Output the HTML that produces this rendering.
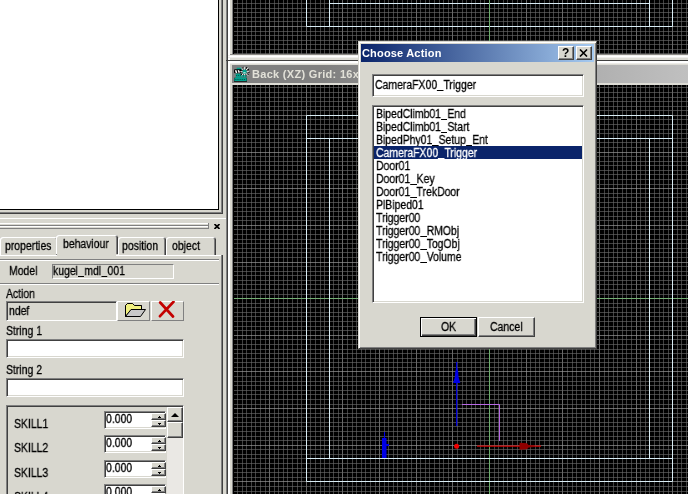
<!DOCTYPE html>
<html><head><meta charset="utf-8"><title>Choose Action</title>
<style>
html,body{margin:0;padding:0}
body{width:688px;height:494px;overflow:hidden;background:#d8d7cf;position:relative;font-family:"Liberation Sans",sans-serif}
#root{position:absolute;left:0;top:0;width:688px;height:494px;overflow:hidden;background:#d8d7cf}
#root div,#root svg,#root span{position:absolute;box-sizing:content-box}
.t{-webkit-text-stroke:0.3px currentColor;will-change:transform;white-space:pre;line-height:1;transform-origin:0 0;font-family:"Liberation Sans",sans-serif}
.u{display:inline-block;width:7.6px;height:1px;background:currentColor;vertical-align:-2px}
.sunk{border:1px solid;border-color:#808080 #fff #fff #808080;box-shadow:inset 1px 1px 0 #404040, inset -1px -1px 0 #d8d7cf}
.rais{border:1px solid;border-color:#fff #404040 #404040 #fff;box-shadow:inset -1px -1px 0 #808080, inset 1px 1px 0 #d8d7cf}
</style></head><body><div id="root">
<div style="left:0px;top:0px;width:218px;height:209px;background:#fff;"></div>
<div style="left:218px;top:0px;width:1px;height:210px;background:#000;"></div>
<div style="left:0px;top:209px;width:219px;height:1px;background:#000;"></div>
<div style="left:221px;top:0px;width:1px;height:213px;background:#808080;"></div>
<div style="left:222px;top:0px;width:1px;height:214px;background:#404040;"></div>
<div style="left:0px;top:212px;width:222px;height:1px;background:#808080;"></div>
<div style="left:0px;top:213px;width:223px;height:1px;background:#404040;"></div>
<div style="left:226px;top:0px;width:1px;height:494px;background:#808080;"></div>
<div style="left:227px;top:0px;width:1px;height:494px;background:#404040;"></div>
<div style="left:228px;top:0px;width:2px;height:494px;background:#fff;"></div>
<div style="left:232px;top:0px;width:1px;height:494px;background:#808080;"></div>
<div style="left:233px;top:0px;width:1px;height:494px;background:#000;"></div>
<div style="left:0px;top:218px;width:226px;height:1px;background:#fff;"></div>
<div style="left:0px;top:223px;width:208px;height:1px;background:#fff;"></div>
<div style="left:0px;top:225px;width:209px;height:1px;background:#808080;"></div>
<div style="left:208px;top:223px;width:1px;height:3px;background:#808080;"></div>
<div style="left:0px;top:226px;width:208px;height:1px;background:#fff;"></div>
<div style="left:0px;top:228px;width:209px;height:1px;background:#808080;"></div>
<div style="left:208px;top:226px;width:1px;height:3px;background:#808080;"></div>
<svg style="left:214px;top:224px" width="6" height="5" viewBox="0 0 6 5"><path d="M0.5 0L5.5 5M5.5 0L0.5 5" stroke="#000" stroke-width="1.7" fill="none"/></svg>
<div style="left:0px;top:255px;width:221px;height:1px;background:#fff;"></div>
<div style="left:221px;top:255px;width:1px;height:239px;background:#808080;"></div>
<div style="left:222px;top:255px;width:1px;height:239px;background:#404040;"></div>
<div style="left:0px;top:237px;width:58px;height:18px;background:#d8d7cf;border-radius:3px 3px 0 0;box-shadow:inset 1px 1px 0 #fff, inset -1px 0 0 #404040, inset -2px 0 0 #808080"></div>
<span class="t" style="left:4.8px;top:239.82px;font-size:12.5px;color:#000;transform:scaleX(0.835);">properties</span>
<div style="left:118px;top:237px;width:48px;height:18px;background:#d8d7cf;border-radius:3px 3px 0 0;box-shadow:inset 1px 1px 0 #fff, inset -1px 0 0 #404040, inset -2px 0 0 #808080"></div>
<span class="t" style="left:122.0px;top:239.82px;font-size:12.5px;color:#000;transform:scaleX(0.835);">position</span>
<div style="left:166px;top:237px;width:50px;height:18px;background:#d8d7cf;border-radius:3px 3px 0 0;box-shadow:inset 1px 1px 0 #fff, inset -1px 0 0 #404040, inset -2px 0 0 #808080"></div>
<span class="t" style="left:172.1px;top:239.82px;font-size:12.5px;color:#000;transform:scaleX(0.835);">object</span>
<div style="left:56px;top:235px;width:62px;height:19px;background:#d8d7cf;border-radius:3px 3px 0 0;box-shadow:inset 1px 1px 0 #fff, inset -1px 0 0 #404040, inset -2px 0 0 #808080"></div>
<span class="t" style="left:62.9px;top:237.82px;font-size:12.5px;color:#000;transform:scaleX(0.835);">behaviour</span>
<div style="left:57px;top:254px;width:59px;height:2px;background:#d8d7cf;"></div>
<div style="left:0px;top:259px;width:219px;height:1px;background:#808080;"></div>
<div style="left:0px;top:260px;width:219px;height:1px;background:#fff;"></div>
<div style="left:0px;top:283px;width:219px;height:1px;background:#808080;"></div>
<div style="left:0px;top:284px;width:219px;height:1px;background:#fff;"></div>
<span class="t" style="left:8.8px;top:264.82px;font-size:12.5px;color:#000;transform:scaleX(0.835);">Model</span>
<div style="left:52px;top:264px;width:120px;height:13px;border:1px solid;border-color:#808080 #fff #fff #808080"></div>
<span class="t" style="left:53.2px;top:265.32px;font-size:12.5px;color:#000;transform:scaleX(0.835);">kugel<i class="u"></i>mdl<i class="u"></i>001</span>
<span class="t" style="left:5.8px;top:287.82px;font-size:12.5px;color:#000;transform:scaleX(0.835);">Action</span>
<div class="sunk" style="left:6px;top:301px;width:109px;height:18px;background:#d8d7cf"></div>
<span class="t" style="left:8.8px;top:305.02px;font-size:12.5px;color:#000;transform:scaleX(0.835);">ndef</span>
<div style="left:117px;top:301px;width:31px;height:18px;border:1px solid;border-color:#fff #808080 #808080 #fff"></div>
<div style="left:151px;top:301px;width:31px;height:18px;border:1px solid;border-color:#fff #808080 #808080 #fff"></div>
<svg style="left:124px;top:302px" width="23" height="17" viewBox="0 0 23 17">
<path d="M1.5 14.5V3.5L3.5 1.5H8.5L10.5 3.5H17.5V7.5" fill="#f4f48c" stroke="#000" stroke-width="1"/>
<path d="M1.5 14.5V3.5L3.5 1.5H8.5L10.5 3.5H17.5V7.5H7.5L1.5 14.5z" fill="#f0f080" stroke="#000" stroke-width="1"/>
<path d="M1.5 14.5L7 7.5H21.5L16.5 14.5z" fill="#c8c8c8" stroke="#000" stroke-width="1"/>
</svg>
<svg style="left:157px;top:301px" width="19" height="17" viewBox="0 0 19 17">
<path d="M3.2 1.5L16 15.5M16.5 0.8L3 15.2" stroke="#c40000" stroke-width="2.7" stroke-linecap="round" fill="none"/></svg>
<span class="t" style="left:5.8px;top:325.02px;font-size:12.5px;color:#000;transform:scaleX(0.835);">String 1</span>
<div class="sunk" style="left:6px;top:339px;width:176px;height:17px;background:#fff"></div>
<span class="t" style="left:5.8px;top:363.92px;font-size:12.5px;color:#000;transform:scaleX(0.835);">String 2</span>
<div class="sunk" style="left:6px;top:378px;width:176px;height:17px;background:#fff"></div>
<div class="sunk" style="left:6px;top:405px;width:176px;height:100px;background:#d8d7cf"></div>
<span class="t" style="left:13.8px;top:417.72px;font-size:12.5px;color:#000;transform:scaleX(0.835);">SKILL1</span>
<div class="sunk" style="left:104px;top:411px;width:60px;height:16px;background:#fff"></div>
<span class="t" style="left:105.9px;top:412.82px;font-size:12.5px;color:#000;transform:scaleX(0.835);">0.000</span>
<div class="rais" style="left:151px;top:413px;width:13px;height:5px;background:#d8d7cf"></div>
<svg style="left:157.5px;top:415.5px" width="3" height="2" viewBox="0 0 3 2"><path d="M1 0h1v1h1v1h-3v-1h1z" fill="#000"/></svg>
<div class="rais" style="left:151px;top:420px;width:13px;height:5px;background:#d8d7cf"></div>
<svg style="left:157.5px;top:422.5px" width="3" height="2" viewBox="0 0 3 2"><path d="M0 0h3v1h-1v1h-1v-1h-1z" fill="#000"/></svg>
<span class="t" style="left:13.8px;top:442.12px;font-size:12.5px;color:#000;transform:scaleX(0.835);">SKILL2</span>
<div class="sunk" style="left:104px;top:435px;width:60px;height:16px;background:#fff"></div>
<span class="t" style="left:105.9px;top:436.82px;font-size:12.5px;color:#000;transform:scaleX(0.835);">0.000</span>
<div class="rais" style="left:151px;top:437px;width:13px;height:5px;background:#d8d7cf"></div>
<svg style="left:157.5px;top:439.5px" width="3" height="2" viewBox="0 0 3 2"><path d="M1 0h1v1h1v1h-3v-1h1z" fill="#000"/></svg>
<div class="rais" style="left:151px;top:444px;width:13px;height:5px;background:#d8d7cf"></div>
<svg style="left:157.5px;top:446.5px" width="3" height="2" viewBox="0 0 3 2"><path d="M0 0h3v1h-1v1h-1v-1h-1z" fill="#000"/></svg>
<span class="t" style="left:13.8px;top:466.72px;font-size:12.5px;color:#000;transform:scaleX(0.835);">SKILL3</span>
<div class="sunk" style="left:104px;top:460px;width:60px;height:16px;background:#fff"></div>
<span class="t" style="left:105.9px;top:461.82px;font-size:12.5px;color:#000;transform:scaleX(0.835);">0.000</span>
<div class="rais" style="left:151px;top:462px;width:13px;height:5px;background:#d8d7cf"></div>
<svg style="left:157.5px;top:464.5px" width="3" height="2" viewBox="0 0 3 2"><path d="M1 0h1v1h1v1h-3v-1h1z" fill="#000"/></svg>
<div class="rais" style="left:151px;top:469px;width:13px;height:5px;background:#d8d7cf"></div>
<svg style="left:157.5px;top:471.5px" width="3" height="2" viewBox="0 0 3 2"><path d="M0 0h3v1h-1v1h-1v-1h-1z" fill="#000"/></svg>
<span class="t" style="left:13.8px;top:491.32px;font-size:12.5px;color:#000;transform:scaleX(0.835);">SKILL4</span>
<div class="sunk" style="left:104px;top:484px;width:60px;height:16px;background:#fff"></div>
<span class="t" style="left:105.9px;top:485.82px;font-size:12.5px;color:#000;transform:scaleX(0.835);">0.000</span>
<div class="rais" style="left:151px;top:486px;width:13px;height:5px;background:#d8d7cf"></div>
<svg style="left:157.5px;top:488.5px" width="3" height="2" viewBox="0 0 3 2"><path d="M1 0h1v1h1v1h-3v-1h1z" fill="#000"/></svg>
<div class="rais" style="left:151px;top:493px;width:13px;height:5px;background:#d8d7cf"></div>
<svg style="left:157.5px;top:495.5px" width="3" height="2" viewBox="0 0 3 2"><path d="M0 0h3v1h-1v1h-1v-1h-1z" fill="#000"/></svg>
<div style="left:167px;top:407px;width:16px;height:90px;background:#eae8e4"></div>
<div class="rais" style="left:167px;top:407px;width:14px;height:13px;background:#d8d7cf"></div>
<svg style="left:171px;top:413px" width="8" height="4" viewBox="0 0 8 4"><path d="M0 4L4 0L8 4z" fill="#000"/></svg>
<div class="rais" style="left:167px;top:422px;width:14px;height:14px;background:#d8d7cf"></div>
<div style="left:230px;top:54px;width:458px;height:1px;background:#8a8884;"></div>
<div style="left:228px;top:55px;width:460px;height:1px;background:#f0efec;"></div>
<div style="left:228px;top:56px;width:460px;height:1px;background:#fff;"></div>
<div style="left:228px;top:57px;width:460px;height:1px;background:#f0efec;"></div>
<div style="left:230px;top:58px;width:458px;height:2px;background:#dddcd5;"></div>
<div style="left:226px;top:60px;width:462px;height:1px;background:#404040;"></div>
<div style="left:228px;top:61px;width:460px;height:2px;background:#fff;"></div>
<div style="left:230px;top:63px;width:458px;height:1px;background:#ecebe7;"></div>
<div style="left:230px;top:64px;width:458px;height:1px;background:#dddcd5;"></div>
<div style="left:232px;top:65px;width:456px;height:18px;background:linear-gradient(90deg,#808080,#808080 20%,#c0c0c0)"></div>
<div style="left:232px;top:83px;width:456px;height:2px;background:#dddcd5;"></div>
<span class="t" style="left:251.6px;top:68.69px;font-size:11px;color:#e2e1d8;font-weight:bold;-webkit-text-stroke:0;letter-spacing:0.3px;">Back (XZ) Grid: 16x</span>
<svg style="left:234px;top:66px" width="16" height="16" viewBox="0 0 16 16">
<rect x="0" y="11.8" width="13" height="3.9" fill="#000"/>
<rect x="0.3" y="12" width="12.4" height="3" fill="#00a08c"/>
<path d="M1.5 13.5H12" stroke="#003830" stroke-width="1" stroke-dasharray="0.8 1.3"/>
<rect x="1.7" y="7.5" width="5.4" height="4.3" fill="#00a08c"/>
<path d="M2.3 9.5H7" stroke="#003830" stroke-width="0.9" stroke-dasharray="0.8 1.2"/>
<rect x="2.7" y="1.7" width="5" height="3" fill="#00a08c"/>
<rect x="0" y="3.2" width="7.4" height="4.1" rx="1" fill="#000"/>
<path d="M1.6 4.2L2.6 6.9M4.3 4.2L5.5 6.9" stroke="#fff" stroke-width="1.5"/>
<circle cx="10.6" cy="5.7" r="4.2" fill="none" stroke="#000" stroke-width="1.6" stroke-dasharray="1.2 1.1"/>
<circle cx="10.6" cy="5.7" r="3" fill="#000" opacity="0.5"/>
<path d="M7.3 1.7L14 9.7M14 1.7L7.5 9.7M6.3 5.7H15.3M10.6 0.7V10.5" stroke="#fff" stroke-width="0.9"/>
<circle cx="10.6" cy="5.7" r="2.2" fill="#00a08c"/>
<path d="M9.3 6.8L11.6 6.8" stroke="#fff" stroke-width="0.9"/>
<rect x="7.3" y="9" width="5" height="2.8" fill="#00a08c" opacity="0.75"/>
</svg>
<svg style="left:234px;top:0px" width="454" height="54" viewBox="234 0 454 54"><rect x="234" y="0" width="454" height="54" fill="#000"/><path d="M237.5 0V54M242.5 0V54M246.5 0V54M251.5 0V54M255.5 0V54M260.5 0V54M265.5 0V54M274.5 0V54M278.5 0V54M283.5 0V54M287.5 0V54M292.5 0V54M297.5 0V54M301.5 0V54M310.5 0V54M315.5 0V54M320.5 0V54M324.5 0V54M329.5 0V54M333.5 0V54M338.5 0V54M347.5 0V54M352.5 0V54M356.5 0V54M361.5 0V54M365.5 0V54M370.5 0V54M375.5 0V54M384.5 0V54M388.5 0V54M393.5 0V54M397.5 0V54M402.5 0V54M407.5 0V54M411.5 0V54M420.5 0V54M425.5 0V54M429.5 0V54M434.5 0V54M439.5 0V54M443.5 0V54M448.5 0V54M457.5 0V54M462.5 0V54M466.5 0V54M471.5 0V54M475.5 0V54M480.5 0V54M484.5 0V54M494.5 0V54M498.5 0V54M503.5 0V54M507.5 0V54M512.5 0V54M517.5 0V54M521.5 0V54M530.5 0V54M535.5 0V54M539.5 0V54M544.5 0V54M549.5 0V54M553.5 0V54M558.5 0V54M567.5 0V54M572.5 0V54M576.5 0V54M581.5 0V54M585.5 0V54M590.5 0V54M594.5 0V54M604.5 0V54M608.5 0V54M613.5 0V54M617.5 0V54M622.5 0V54M626.5 0V54M631.5 0V54M640.5 0V54M645.5 0V54M649.5 0V54M654.5 0V54M659.5 0V54M663.5 0V54M668.5 0V54M677.5 0V54M681.5 0V54M686.5 0V54" stroke="#414141" stroke-opacity="1" stroke-width="1" fill="none"/><path d="M269.5 0V54M306.5 0V54M342.5 0V54M379.5 0V54M416.5 0V54M452.5 0V54M489.5 0V54M526.5 0V54M562.5 0V54M599.5 0V54M636.5 0V54M672.5 0V54" stroke="#686868" stroke-opacity="1" stroke-width="1" fill="none"/><path d="M234 3.5H688M234 8.5H688M234 12.5H688M234 17.5H688M234 21.5H688M234 31.5H688M234 35.5H688M234 40.5H688M234 44.5H688M234 49.5H688M234 53.5H688" stroke="#6a6a6a" stroke-opacity="0.63" stroke-width="1" fill="none"/><path d="M234 26.5H688" stroke="#949494" stroke-opacity="0.7" stroke-width="1" fill="none"/><path d="M306.5 0V26.5H672.5V0M329.5 0V26.5M649.5 0V26.5M329.5 3.5H649.5" stroke="#d8ecf4" stroke-width="1" fill="none"/><path d="M489.5 0V54" stroke="#6cac6c" stroke-width="1" fill="none"/></svg>
<svg style="left:234px;top:85px" width="454" height="409" viewBox="234 85 454 409"><rect x="234" y="85" width="454" height="409" fill="#000"/><path d="M237.5 85V494M242.5 85V494M246.5 85V494M251.5 85V494M255.5 85V494M260.5 85V494M265.5 85V494M274.5 85V494M278.5 85V494M283.5 85V494M287.5 85V494M292.5 85V494M297.5 85V494M301.5 85V494M310.5 85V494M315.5 85V494M320.5 85V494M324.5 85V494M329.5 85V494M333.5 85V494M338.5 85V494M347.5 85V494M352.5 85V494M356.5 85V494M361.5 85V494M365.5 85V494M370.5 85V494M375.5 85V494M384.5 85V494M388.5 85V494M393.5 85V494M397.5 85V494M402.5 85V494M407.5 85V494M411.5 85V494M420.5 85V494M425.5 85V494M429.5 85V494M434.5 85V494M439.5 85V494M443.5 85V494M448.5 85V494M457.5 85V494M462.5 85V494M466.5 85V494M471.5 85V494M475.5 85V494M480.5 85V494M484.5 85V494M494.5 85V494M498.5 85V494M503.5 85V494M507.5 85V494M512.5 85V494M517.5 85V494M521.5 85V494M530.5 85V494M535.5 85V494M539.5 85V494M544.5 85V494M549.5 85V494M553.5 85V494M558.5 85V494M567.5 85V494M572.5 85V494M576.5 85V494M581.5 85V494M585.5 85V494M590.5 85V494M594.5 85V494M604.5 85V494M608.5 85V494M613.5 85V494M617.5 85V494M622.5 85V494M626.5 85V494M631.5 85V494M640.5 85V494M645.5 85V494M649.5 85V494M654.5 85V494M659.5 85V494M663.5 85V494M668.5 85V494M677.5 85V494M681.5 85V494M686.5 85V494" stroke="#414141" stroke-opacity="1" stroke-width="1" fill="none"/><path d="M269.5 85V494M306.5 85V494M342.5 85V494M379.5 85V494M416.5 85V494M452.5 85V494M489.5 85V494M526.5 85V494M562.5 85V494M599.5 85V494M636.5 85V494M672.5 85V494" stroke="#686868" stroke-opacity="1" stroke-width="1" fill="none"/><path d="M234 87.5H688M234 92.5H688M234 97.5H688M234 101.5H688M234 106.5H688M234 110.5H688M234 119.5H688M234 124.5H688M234 129.5H688M234 133.5H688M234 138.5H688M234 142.5H688M234 147.5H688M234 156.5H688M234 161.5H688M234 165.5H688M234 170.5H688M234 174.5H688M234 179.5H688M234 184.5H688M234 193.5H688M234 197.5H688M234 202.5H688M234 207.5H688M234 211.5H688M234 216.5H688M234 220.5H688M234 229.5H688M234 234.5H688M234 239.5H688M234 243.5H688M234 248.5H688M234 252.5H688M234 257.5H688M234 266.5H688M234 271.5H688M234 275.5H688M234 280.5H688M234 284.5H688M234 289.5H688M234 294.5H688M234 303.5H688M234 307.5H688M234 312.5H688M234 316.5H688M234 321.5H688M234 326.5H688M234 330.5H688M234 339.5H688M234 344.5H688M234 349.5H688M234 353.5H688M234 358.5H688M234 362.5H688M234 367.5H688M234 376.5H688M234 381.5H688M234 385.5H688M234 390.5H688M234 394.5H688M234 399.5H688M234 404.5H688M234 413.5H688M234 417.5H688M234 422.5H688M234 426.5H688M234 431.5H688M234 436.5H688M234 440.5H688M234 449.5H688M234 454.5H688M234 458.5H688M234 463.5H688M234 468.5H688M234 472.5H688M234 477.5H688M234 486.5H688M234 491.5H688" stroke="#6a6a6a" stroke-opacity="0.63" stroke-width="1" fill="none"/><path d="M234 115.5H688M234 152.5H688M234 188.5H688M234 225.5H688M234 262.5H688M234 298.5H688M234 335.5H688M234 371.5H688M234 408.5H688M234 445.5H688M234 481.5H688" stroke="#949494" stroke-opacity="0.7" stroke-width="1" fill="none"/><path d="M234 298.5H688" stroke="#74ae74" stroke-width="1" fill="none"/><path d="M489.5 85V494" stroke="#6cac6c" stroke-width="1" fill="none"/><path d="M306.5 115.5H672.5V481.5H306.5zM306.5 138.5H672.5M306.5 458.5H672.5M329.5 138.5V458.5M649.5 138.5V458.5" stroke="#d8ecf4" stroke-width="1" fill="none"/><path d="M456.7 362V426" stroke="#0000e6" stroke-width="1.2"/><path d="M456.7 366L458.2 372L458.5 377L460.3 383H453.1L454.9 377L455.2 372z" fill="#0000e6"/><path d="M462 404.5H499.5V441" stroke="#b868e6" stroke-width="1" fill="none"/><circle cx="456.6" cy="446.2" r="2.5" fill="#f00000"/><path d="M477 446.2H541" stroke="#d00000" stroke-width="1.2"/><path d="M519.5 442.7L527 443.2L528.5 445L535 445.4V447L528.5 447.4L527 449.3L519.5 449.7z" fill="#900000"/><path d="M384.5 432V438" stroke="#0000e6" stroke-width="1"/><path d="M382 438H386.5V444H389V446H386.5V458H382z" fill="#0000e6"/></svg>
<div style="left:358px;top:41px;width:237px;height:306px;background:#d8d7cf;border:1px solid;border-color:#d8d7cf #404040 #404040 #d8d7cf;box-shadow:inset 1px 1px 0 #fff, inset -1px -1px 0 #808080"></div>
<div style="left:361px;top:44px;width:233px;height:18px;background:linear-gradient(90deg,#0a246a,#a6caf0)"></div>
<span class="t" style="left:362.4px;top:48.19px;font-size:11px;color:#fff;font-weight:bold;-webkit-text-stroke:0;letter-spacing:0.18px;">Choose Action</span>
<div class="rais" style="left:558px;top:46px;width:14px;height:12px;background:#d8d7cf"></div>
<div class="rais" style="left:576px;top:46px;width:14px;height:12px;background:#d8d7cf"></div>
<span class="t" style="left:561.8px;top:47.14px;font-size:12px;color:#000;font-weight:bold;-webkit-text-stroke:0;">?</span>
<svg style="left:579px;top:49px" width="9" height="8" viewBox="0 0 9 8"><path d="M1 0.5L8 7.5M8 0.5L1 7.5" stroke="#000" stroke-width="1.6" fill="none"/></svg>
<div class="sunk" style="left:372px;top:74px;width:210px;height:21px;background:#fff"></div>
<span class="t" style="left:375.0px;top:78.52px;font-size:12.5px;color:#000;transform:scaleX(0.835);">CameraFX00<i class="u"></i>Trigger</span>
<div class="sunk" style="left:372px;top:105px;width:210px;height:196px;background:#fff"></div>
<span class="t" style="left:376.2px;top:108.32px;font-size:12.5px;color:#000;transform:scaleX(0.835);">BipedClimb01<i class="u"></i>End</span>
<span class="t" style="left:376.2px;top:121.32px;font-size:12.5px;color:#000;transform:scaleX(0.835);">BipedClimb01<i class="u"></i>Start</span>
<span class="t" style="left:376.2px;top:134.32px;font-size:12.5px;color:#000;transform:scaleX(0.835);">BipedPhy01<i class="u"></i>Setup<i class="u"></i>Ent</span>
<div style="left:374px;top:146px;width:208px;height:13px;background:#0a246a;"></div>
<span class="t" style="left:376.2px;top:147.32px;font-size:12.5px;color:#fff;transform:scaleX(0.835);">CameraFX00<i class="u"></i>Trigger</span>
<span class="t" style="left:376.2px;top:160.32px;font-size:12.5px;color:#000;transform:scaleX(0.835);">Door01</span>
<span class="t" style="left:376.2px;top:173.32px;font-size:12.5px;color:#000;transform:scaleX(0.835);">Door01<i class="u"></i>Key</span>
<span class="t" style="left:376.2px;top:186.32px;font-size:12.5px;color:#000;transform:scaleX(0.835);">Door01<i class="u"></i>TrekDoor</span>
<span class="t" style="left:376.2px;top:199.32px;font-size:12.5px;color:#000;transform:scaleX(0.835);">PlBiped01</span>
<span class="t" style="left:376.2px;top:212.32px;font-size:12.5px;color:#000;transform:scaleX(0.835);">Trigger00</span>
<span class="t" style="left:376.2px;top:225.32px;font-size:12.5px;color:#000;transform:scaleX(0.835);">Trigger00<i class="u"></i>RMObj</span>
<span class="t" style="left:376.2px;top:238.32px;font-size:12.5px;color:#000;transform:scaleX(0.835);">Trigger00<i class="u"></i>TogObj</span>
<span class="t" style="left:376.2px;top:251.32px;font-size:12.5px;color:#000;transform:scaleX(0.835);">Trigger00<i class="u"></i>Volume</span>
<div style="left:420px;top:317px;width:55px;height:18px;border:1px solid #000;background:#d8d7cf;box-shadow:inset 1px 1px 0 #fff, inset -1px -1px 0 #404040, inset -2px -2px 0 #808080"></div>
<div class="rais" style="left:478px;top:317px;width:55px;height:18px;background:#d8d7cf"></div>
<span class="t" style="left:441.0px;top:320.62px;font-size:12.5px;color:#000;transform:scaleX(0.835);">OK</span>
<span class="t" style="left:489.9px;top:320.62px;font-size:12.5px;color:#000;transform:scaleX(0.835);">Cancel</span>
</div></body></html>
